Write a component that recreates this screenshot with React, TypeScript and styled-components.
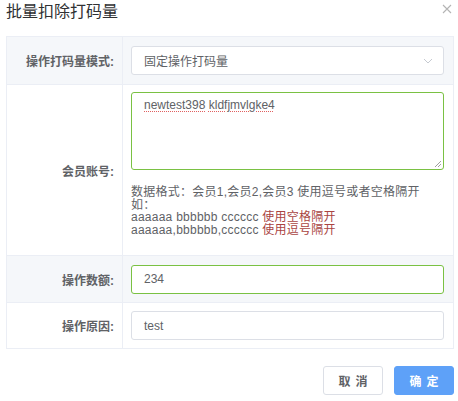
import styled, { createGlobalStyle } from 'styled-components';

const GlobalStyle = createGlobalStyle`
  html, body {
    margin: 0;
    padding: 0;
    background: #fff;
  }
  body {
    font-family: "Liberation Sans", "Noto Sans CJK SC", sans-serif;
    color: #606266;
  }
`;

const Dialog = styled.div`
  width: 458px;
  height: 401px;
  box-sizing: border-box;
  padding: 0 4px 0 6px;
`;

const Header = styled.div`
  height: 36px;
  display: flex;
  align-items: flex-start;
  justify-content: space-between;
`;

const Title = styled.h2`
  margin: 0;
  padding-top: 2px;
  font-size: 16px;
  font-weight: normal;
  line-height: 20px;
  color: #303133;
`;

const Close = styled.button`
  border: 0;
  background: none;
  padding: 0;
  margin: 4px 2px 0 0;
  width: 10px;
  height: 10px;
  display: flex;
  cursor: pointer;
`;

const Table = styled.div`
  width: 448px;
  border: 1px solid #ebeef5;
  border-bottom: 0;
  box-sizing: border-box;
`;

const Row = styled.div<{ $grey?: boolean; $h: number }>`
  display: grid;
  grid-template-columns: 116px 1fr;
  height: ${(p) => p.$h}px;
  background: ${(p) => (p.$grey ? '#f5f7fa' : '#fff')};
  border-bottom: 1px solid #ebeef5;
  box-sizing: border-box;
`;

const Label = styled.div`
  display: flex;
  align-items: center;
  justify-content: flex-end;
  padding-right: 8px;
  border-right: 1px solid #ebeef5;
  font-size: 12px;
  font-weight: bold;
  color: #606266;
`;

const Cell = styled.div<{ $top?: boolean }>`
  display: flex;
  flex-direction: column;
  justify-content: ${(p) => (p.$top ? 'flex-start' : 'center')};
  padding: ${(p) => (p.$top ? '7px' : '0')} 9px 0 8px;
`;

const Field = styled.div<{ $focus?: boolean }>`
  height: 29px;
  box-sizing: border-box;
  border: 1px solid ${(p) => (p.$focus ? '#7ac143' : '#dcdfe6')};
  border-radius: 3px;
  background: #fff;
  display: flex;
  align-items: center;
  justify-content: space-between;
  padding: 0 10px 0 12px;
  font-size: 12px;
  color: #606266;
`;

const Area = styled.div`
  position: relative;
  height: 78px;
  box-sizing: border-box;
  border: 1px solid #7ac143;
  border-radius: 3px;
  background: #fff;
  padding: 4px 12px;
  font-size: 12px;
  line-height: 16px;
  color: #606266;
`;

const Spell = styled.span`
  text-decoration: underline dotted #e06060;
  text-decoration-thickness: 1px;
  text-underline-offset: 2px;
`;

const Grip = styled.svg`
  position: absolute;
  right: 1px;
  bottom: 1px;
`;

const Help = styled.div`
  margin-top: 16px;
  font-size: 12px;
  letter-spacing: 0.25px;
  line-height: 12.5px;
  color: #606266;
`;

const Red = styled.span`
  color: #a94442;
`;

const Footer = styled.div`
  display: flex;
  justify-content: flex-end;
  gap: 11px;
  padding-top: 17px;
`;

const Btn = styled.button<{ $primary?: boolean }>`
  width: 60px;
  height: 29px;
  border-radius: 3px;
  box-sizing: border-box;
  font-family: inherit;
  font-size: 12px;
  font-weight: bold;
  letter-spacing: 5px;
  text-indent: 5px;
  cursor: pointer;
  border: 1px solid ${(p) => (p.$primary ? '#5ea1f8' : '#dcdfe6')};
  background: ${(p) => (p.$primary ? '#5ea1f8' : '#fff')};
  color: ${(p) => (p.$primary ? '#fff' : '#606266')};
`;

export default function App() {
  return (
    <>
      <GlobalStyle />
      <Dialog>
        <Header>
          <Title>批量扣除打码量</Title>
          <Close aria-label="close">
            <svg width="10" height="10" viewBox="0 0 10 10">
              <path d="M1 1L9 9M9 1L1 9" stroke="#b4b4b4" strokeWidth="1.1" />
            </svg>
          </Close>
        </Header>
        <Table>
          <Row $grey $h={48}>
            <Label>操作打码量模式:</Label>
            <Cell>
              <Field>
                <span>固定操作打码量</span>
                <svg width="10" height="6" viewBox="0 0 10 6">
                  <path d="M1 1L5 5L9 1" fill="none" stroke="#c0c4cc" strokeWidth="0.9" />
                </svg>
              </Field>
            </Cell>
          </Row>
          <Row $h={171}>
            <Label>会员账号:</Label>
            <Cell $top>
              <Area>
                <Spell>newtest398</Spell> <Spell>kldfjmvlgke4</Spell>
                <Grip width="8" height="8" viewBox="0 0 8 8">
                  <path d="M7 1L1 7M7 4L4 7" stroke="#888" strokeWidth="0.8" />
                </Grip>
              </Area>
              <Help>
                数据格式：会员1,会员2,会员3 使用逗号或者空格隔开
                <br />
                如：
                <br />
                aaaaaa bbbbbb cccccc <Red>使用空格隔开</Red>
                <br />
                aaaaaa,bbbbbb,cccccc <Red>使用逗号隔开</Red>
              </Help>
            </Cell>
          </Row>
          <Row $grey $h={47}>
            <Label>操作数额:</Label>
            <Cell>
              <Field $focus>234</Field>
            </Cell>
          </Row>
          <Row $h={46}>
            <Label>操作原因:</Label>
            <Cell>
              <Field>test</Field>
            </Cell>
          </Row>
        </Table>
        <Footer>
          <Btn>取消</Btn>
          <Btn $primary>确定</Btn>
        </Footer>
      </Dialog>
    </>
  );
}
